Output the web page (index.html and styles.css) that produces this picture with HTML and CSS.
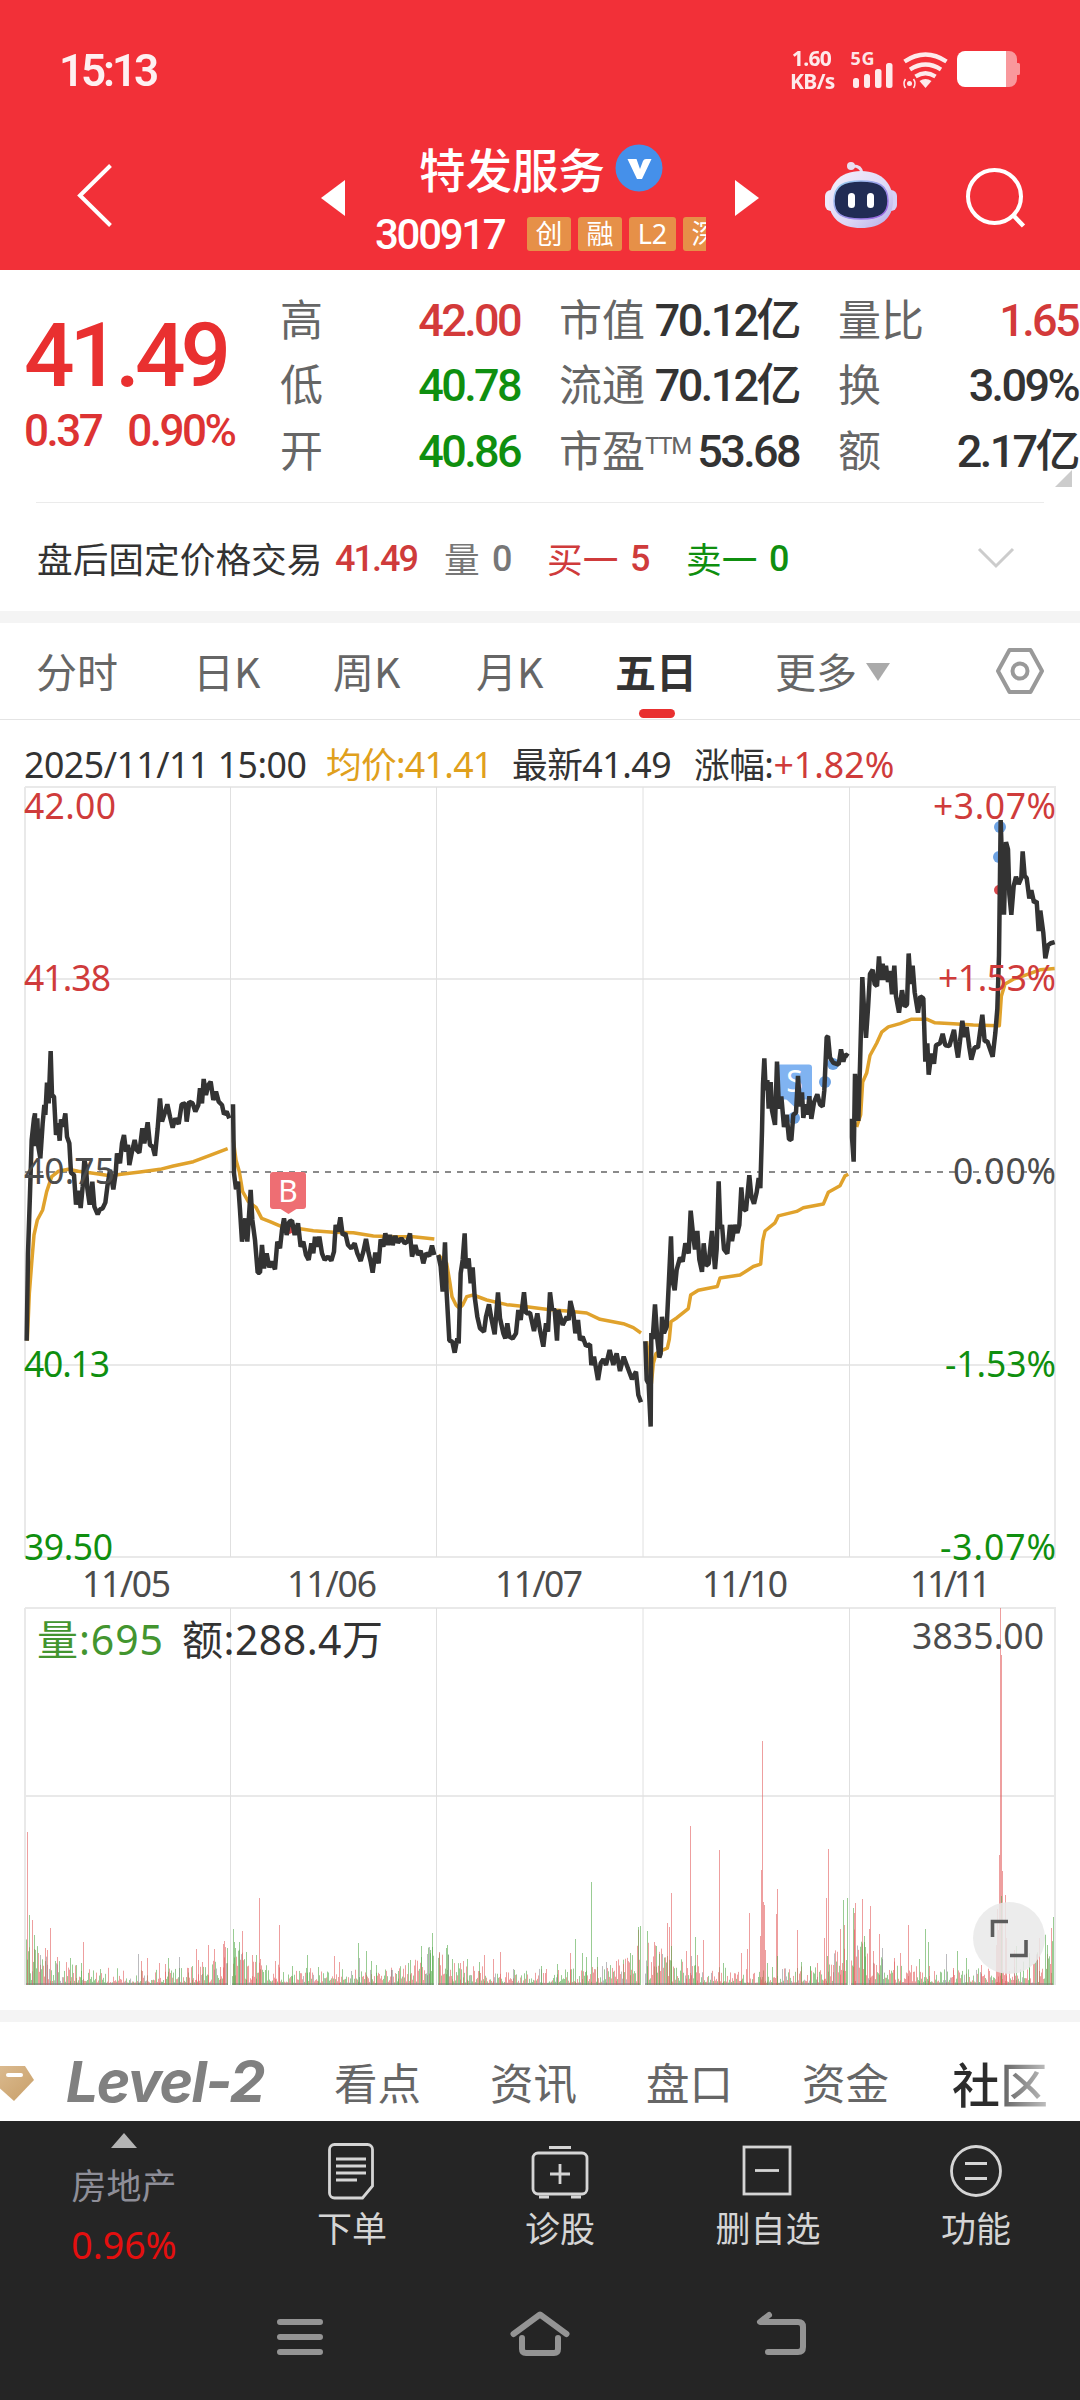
FILE: index.html
```html
<!DOCTYPE html>
<html lang="zh-CN">
<head>
<meta charset="utf-8">
<title>特发服务 300917</title>
<link rel="stylesheet" href="styles.css">
</head>
<body>
<header class="header">
  <div class="status">
    <span class="clock">15:13</span>
    <div class="net"><span>1.60</span><span>KB/s</span></div>
    <svg class="signals" width="170" height="48" viewBox="850 48 170 48">
      <g fill="#fff" fill-opacity=".9">
        <text class="fiveg" x="850.5" y="67" textLength="24">5G</text>
        <rect x="853" y="80" width="6" height="10" rx="2.5"/><rect x="864" y="76" width="6" height="14" rx="2.5"/>
        <rect x="875" y="71" width="6.500" height="19" rx="2.500"/><rect x="886" y="65" width="6.500" height="25" rx="2.500"/>
        <path d="M919.5 83q6-4 12 0l-6 7z"/><circle cx="909.500" cy="85.500" r="2.500"/>
      </g>
      <g fill="none" stroke="#fff" stroke-opacity=".9" stroke-width="4.200">
        <path d="M904.500 63.500q21-14 42 0M910 71.500q15.500-10 31 0M915.500 78.500q10-6.500 20 0"/>
        <path stroke-width="1.600" d="M905.500 81q-3 4.500 0 9M913.500 81q3 4.500 0 9"/>
      </g>
      <path d="M965 53h41v36h-41a8 8 0 0 1-8-8V61a8 8 0 0 1 8-8z" fill="#fff"/>
      <path d="M1006 53h3a8 8 0 0 1 8 8v4h1.500a1.500 1.500 0 0 1 1.500 1.500v9a1.500 1.500 0 0 1-1.500 1.500H1017v4a8 8 0 0 1-8 8h-3z" fill="#fff" fill-opacity=".5"/>
    </svg>
  </div>
  <div class="titlebar">
    <svg class="back" width="40" height="68" viewBox="75 161 40 68"><path d="M110.500 165.500 80 195.500l30.500 30" fill="none" stroke="#fff" stroke-width="4"/></svg>
    <svg class="prev" width="25" height="36" viewBox="0 0 25 36"><path d="M24 0v36L0 18z" fill="#fff"/></svg>
    <div class="stock">
      <div class="name">特发服务
        <svg width="48" height="48" viewBox="0 0 48 48"><circle cx="24" cy="24" r="23.500" fill="#4590ea"/><path d="M12.500 15h9l3.500 10 3-8q.8-2 3-2h5.500l-9.500 20h-5z" fill="#fff"/></svg>
      </div>
      <div class="code"><span>300917</span><div class="tags"><i>创</i><i>融</i><i>L2</i><i>深</i></div></div>
    </div>
    <svg class="next" width="25" height="36" viewBox="0 0 25 36"><path d="M0 0v36L24 18z" fill="#fff"/></svg>
    <svg class="robot" width="76" height="70" viewBox="823 160 76 70">
      <defs><linearGradient id="head" x1="0" y1="0" x2="1" y2="1"><stop offset="0" stop-color="#f5f0fb"/><stop offset=".6" stop-color="#dcd8f6"/><stop offset="1" stop-color="#b3aae6"/></linearGradient>
      <linearGradient id="rim" x1="0" y1="0" x2="1" y2="1"><stop offset="0" stop-color="#9bd6f2"/><stop offset="1" stop-color="#9b5ce0"/></linearGradient></defs>
      <path d="M851 166q10-1 11 7" fill="none" stroke="#eadff0" stroke-width="3"/><circle cx="851" cy="166" r="4" fill="#eadff0"/>
      <rect x="825" y="190" width="12" height="21" rx="6" fill="#eeeafa"/><rect x="885" y="190" width="12" height="21" rx="6" fill="#d6d2f6"/>
      <path d="M861 171c22 0 32 14 32 30 0 17-12 27-32 27s-32-10-32-27c0-16 10-30 32-30z" fill="url(#head)"/>
      <path d="M861 181c17 0 27 4 27 20 0 13-8 18-27 18s-27-5-27-18c0-16 10-20 27-20z" fill="#212c54" stroke="url(#rim)" stroke-width="1.500"/>
      <rect x="848" y="193" width="7" height="15" rx="3.500" fill="#fff"/><rect x="867" y="193" width="7" height="15" rx="3.500" fill="#fff"/>
    </svg>
    <svg class="search" width="62" height="62" viewBox="964 166 62 62"><circle cx="994.500" cy="196.500" r="26.500" fill="none" stroke="#fff" stroke-width="4"/><path d="m1013 215 10.500 11" stroke="#fff" stroke-width="4.500"/></svg>
  </div>
</header>

<section class="quote">
  <div class="price"><b>41.49</b><div class="delta"><span>0.37</span><span>0.90%</span></div></div>
  <div class="stats">
    <span>高</span><em class="up">42.00</em><span>市值</span><em>70.12亿</em><span class="l4">量比</span><em class="up">1.65</em>
    <span>低</span><em class="down">40.78</em><span>流通</span><em>70.12亿</em><span class="l4">换</span><em>3.09%</em>
    <span>开</span><em class="down">40.86</em><span>市盈<sup>TTM</sup></span><em>53.68</em><span class="l4">额</span><em>2.17亿</em>
  </div>
  <i class="corner"></i>
</section>
<section class="after">
  <span class="t">盘后固定价格交易</span><span class="n up">41.49</span><span class="g">量</span><span class="n g">0</span>
  <span class="up">买一</span><span class="n up">5</span><span class="down">卖一</span><span class="n down">0</span>
  <svg width="38" height="22" viewBox="0 0 38 22"><path d="m2 2 17 17L36 2" fill="none" stroke="#ccc" stroke-width="3"/></svg>
</section>

<nav class="periods">
  <span>分时</span><span>日K</span><span>周K</span><span>月K</span><span class="on">五日</span><span>更多<i></i></span>
  <svg width="50" height="48" viewBox="0 0 50 48"><path d="M14.500 3h21L47 24 35.500 45h-21L3 24z" fill="none" stroke="#999" stroke-width="4" stroke-linejoin="round"/><circle cx="25" cy="24" r="7.500" fill="none" stroke="#999" stroke-width="4"/></svg>
</nav>
<div class="legend"><span class="a">2025/11/11 15:00</span><span class="avg">均价:41.41</span><span class="a">最新41.49</span><span>涨幅:<b>+1.82%</b></span></div>

<svg class="chart" width="1080" height="825" viewBox="0 780 1080 825">
  <g class="grid">
    <path class="wide" d="M25 787H1056M25 979H1056M25 1365H1056M25 1557H1056M25 787V1557M1055 787V1557"/>
    <path d="M230.500 787V1557M436.500 787V1557M643 787V1557M849.500 787V1557"/>
    <path class="zero" d="M25 1172H1055"/>
  </g>
  <g class="mark">
    <rect x="777" y="1064.500" width="35" height="35" rx="3" fill="#80b3f1"/><path d="M786 1099h17l-8.500 8z" fill="#80b3f1"/>
    <text x="794.500" y="1092" textLength="17" class="tag">S</text>
    <g fill="#6ea3e3"><circle cx="794" cy="1118" r="6"/><circle cx="825" cy="1082" r="6"/><circle cx="833" cy="1064" r="6"/><circle cx="1000" cy="827" r="6"/><circle cx="999" cy="857" r="6"/></g>
    <circle cx="999" cy="890" r="5" fill="#d9484c"/>
  </g>
  <g class="avgline">
    <g transform="translate(0 980) scale(.33333)">
      <polyline points="82,1082 88,940 95,850 102,765 112,720 128,690 140,635 155,590 175,574 205,568 235,574 280,580 330,587 370,582 420,576 480,568 520,558 580,545 630,526 683,506"/>
      <polyline points="700,480 708,540 718,575 728,635 745,665 768,682 785,715 810,725 845,740 890,745 940,752 1000,757 1060,758 1120,768 1180,770 1240,770 1303,777"/>
    </g>
    <g transform="translate(420 1150) scale(.33333)">
      <polyline points="55,315 80,340 90,400 96,440 108,465 118,475 128,465 140,440 160,435 200,450 260,464 320,470 390,479 440,483 500,489 540,508 610,521 640,533 663,549"/>
    </g>
    <g transform="translate(640 780) scale(.33333 .40816)">
      <polyline points="20,1375 34,1480 40,1430 48,1405 64,1398 82,1392 88,1370 93,1327 110,1318 145,1295 152,1262 175,1250 232,1241 240,1220 300,1213 325,1200 340,1192 362,1186 368,1130 375,1105 405,1085 415,1068 470,1057 490,1048 550,1039 565,1010 600,994 615,970 625,966"/>
      <polyline points="650,850 662,820 668,740 680,718 690,675 710,645 725,618 745,605 780,597 815,586 860,586 885,595 940,597 1000,600 1078,602 1084,530 1095,500 1120,488 1150,480 1200,465 1244,462"/>
    </g>
  </g>
  <circle cx="289" cy="1229" r="5" fill="#d9484c"/>
  <g class="line">
    <g transform="translate(0 980) scale(.33333)">
      <polyline points="80,1082 84,820 90,640 95,480 102,415 105,400 104,498 112,415 115,500 121,535 128,430 133,375 136,405 141,308 146,370 152,213 156,345 162,350 168,465 174,430 179,482 183,418 189,440 196,400 201,470 208,490 213,578 222,585 228,674 236,632 242,684 248,620 253,540 258,560 262,625 269,674 277,605 283,680 293,703 300,688 308,685 316,668 322,620 330,570 340,628 347,580 351,520 360,550 366,490 372,465 378,515 384,495 388,555 396,515 404,480 410,510 418,518 427,445 433,490 443,427 450,495 458,500 465,527 473,445 480,355 486,425 494,400 502,373 510,410 518,443 526,415 536,432 545,373 556,370 560,425 568,365 578,370 586,395 595,375 600,325 606,370 611,297 618,345 625,315 632,305 640,360 648,335 656,365 666,375 672,403 680,395 688,415"/>
      <polyline points="699,373 702,580 708,628 714,605 720,690 726,785 736,715 742,785 752,630 757,720 765,780 773,878 780,878 786,795 792,865 800,820 808,862 816,845 825,868 832,785 840,805 846,750 852,715 860,765 868,725 876,722 884,765 894,730 902,800 910,785 918,825 926,840 934,790 940,820 945,770 952,800 958,770 966,820 974,840 984,830 994,842 1002,815 1007,735 1014,755 1021,712 1028,765 1036,760 1044,795 1054,805 1064,790 1072,820 1082,843 1090,815 1098,777 1106,820 1112,845 1118,878 1126,818 1136,850 1142,778 1150,800 1156,760 1164,795 1170,765 1178,795 1186,768 1194,788 1204,775 1214,790 1222,785 1230,760 1236,830 1246,795 1254,825 1262,812 1270,850 1278,820 1288,828 1296,797 1303,825"/>
    </g>
    <g transform="translate(420 1150) scale(.33333)">
      <polyline points="55,315 62,350 68,425 75,277 80,430 88,572 97,575 104,608 112,565 116,580 122,370 128,330 134,250 138,355 146,325 152,400 158,352 164,440 172,500 180,535 192,545 198,500 207,463 214,505 224,553 234,427 240,505 250,550 256,565 262,520 268,560 278,566 288,550 295,480 302,510 312,427 318,490 330,488 342,543 352,490 360,540 370,590 378,520 384,545 390,427 396,475 404,480 411,572 415,480 428,525 440,500 446,510 451,453 460,490 466,550 474,510 480,570 488,560 498,588 510,583 514,645 522,620 534,690 542,640 550,628 558,645 569,600 580,645 590,610 600,663 611,620 622,650 636,688 648,665 655,735 663,757"/>
    </g>
    <g transform="translate(640 780) scale(.33333 .40816)">
      <polyline points="16,1375 20,1470 26,1480 32,1584 34,1355 38,1370 45,1285 52,1370 58,1415 62,1405 66,1315 72,1355 80,1340 86,1240 93,1118 97,1225 104,1250 110,1200 120,1170 128,1180 136,1135 146,1160 152,1055 160,1120 165,1150 172,1105 178,1175 186,1205 191,1135 198,1190 206,1185 216,1105 225,1198 230,1150 236,983 241,1100 246,1090 252,1150 262,1160 270,1090 276,1130 284,1090 292,1110 298,1090 304,998 309,1050 318,1055 328,968 334,1020 342,1038 350,1010 356,975 361,1000 366,860 369,745 373,682 377,760 382,735 386,805 392,740 396,810 405,845 411,690 417,805 424,775 432,850 440,820 447,880 454,882 460,820 468,815 474,725 480,800 486,765 490,828 497,795 503,820 508,775 514,830 522,790 532,770 540,795 548,800 553,760 560,630 564,628 570,680 580,693 596,697 603,660 610,690 616,672 625,677"/>
      <polyline points="636,830 636,875 641,935 645,720 650,775 655,835 660,700 667,483 672,560 678,632 684,560 690,475 698,465 704,500 711,505 717,432 722,490 728,450 734,490 738,455 744,495 750,468 756,525 763,455 768,530 777,570 786,515 794,555 801,550 806,425 812,500 818,455 824,520 834,570 841,530 850,535 856,690 862,645 866,722 874,670 882,695 888,650 900,645 908,622 916,650 928,652 942,612 948,650 954,680 960,640 967,590 974,630 980,605 988,655 994,685 1004,655 1014,655 1027,575 1034,640 1042,640 1058,678 1066,620 1072,560 1077,430 1082,98 1086,200 1092,330 1098,152 1104,170 1108,280 1114,330 1121,260 1128,237 1136,255 1144,240 1148,175 1154,235 1160,240 1168,290 1174,270 1182,300 1190,297 1196,370 1201,320 1210,375 1216,437 1224,405 1232,400 1244,397"/>
    </g>
  </g>
  <rect x="270" y="1172" width="36" height="37" rx="3" fill="#ee6e73"/><path d="M279 1208h19l-9.500 6z" fill="#ee6e73"/>
  <text x="288" y="1202" class="tag">B</text>
  <g class="labels">
    <g class="up"><text x="24" y="819" textLength="92">42.00</text><text x="24" y="991" textLength="87">41.38</text></g>
    <text x="24" y="1184" textLength="91">40.75</text>
    <g class="down"><text x="24" y="1377" textLength="86">40.13</text><text x="24" y="1560" textLength="89">39.50</text></g>
    <g text-anchor="end">
      <g class="up"><text x="1056" y="819" textLength="123">+3.07%</text><text x="1056" y="991" textLength="118">+1.53%</text></g>
      <text x="1056" y="1184" textLength="103">0.00%</text>
      <g class="down"><text x="1056" y="1377" textLength="111">-1.53%</text><text x="1056" y="1560" textLength="116">-3.07%</text></g>
    </g>
    <g class="dates"><text x="82" y="1597" textLength="89">11/05</text><text x="287" y="1597" textLength="90">11/06</text><text x="495" y="1597" textLength="88">11/07</text><text x="702" y="1597" textLength="86">11/10</text><text x="910" y="1597" textLength="81">11/11</text></g>
  </g>
</svg>

<svg class="volume" width="1080" height="405" viewBox="0 1605 1080 405">
  <g class="grid"><path class="wide" d="M25 1608H1056M25 1796H1056M25 1608V1985M1055 1608V1985"/><path d="M230.500 1608V1985M436.500 1608V1985M643 1608V1985M849.500 1608V1985"/></g>
  <g id="bars"></g>
  <text x="37" y="1655" textLength="126" class="vol">量:695</text>
  <text x="182" y="1655" textLength="201" class="amt">额:288.4万</text>
  <text x="1044" y="1649" textLength="132" text-anchor="end" class="max">3835.00</text>
  <circle cx="1009" cy="1938" r="36" fill="#e9e9e9" fill-opacity=".86"/>
  <path d="M992.500 1937v-15.500h15.500M1010 1955.500h16V1940" fill="none" stroke="#5c5c5c" stroke-width="3.600"/>
</svg>

<nav class="sections">
  <svg class="gem" width="36" height="42" viewBox="0 2060 36 42"><defs><linearGradient id="gold" x1="0" y1="0" x2="1" y2="1"><stop offset="0" stop-color="#dcbc92"/><stop offset="1" stop-color="#c89f68"/></linearGradient></defs><path d="M-4 2064h29l9 14-20 21-20-18z" fill="url(#gold)"/><rect x="6" y="2071" width="17" height="4" rx="2" fill="#fff"/></svg>
  <span class="level">Level-2</span><span>看点</span><span>资讯</span><span>盘口</span><span>资金</span><span class="on">社区</span>
</nav>

<footer class="footer">
  <div class="actions">
    <div class="sector"><i></i><span>房地产</span><b>0.96%</b></div>
    <div><svg viewBox="0 0 60 60"><path d="M12.500 4.500h33a5 5 0 0 1 5 5V46l-10 12h-28a5 5 0 0 1-5-5V9.500a5 5 0 0 1 5-5z"/><path d="M14 19h30M14 26h30M14 33h30M14 40h21"/></svg><span>下单</span></div>
    <div><svg viewBox="0 0 60 60"><rect x="3" y="13" width="54" height="41" rx="5"/><path d="M19 7.500h22M30 24v20M20 34h20M9 57h10M41 57h10"/></svg><span>诊股</span></div>
    <div><svg viewBox="0 0 60 60"><rect x="6" y="7" width="46" height="47"/><path d="M17 30.500h24"/></svg><span>删自选</span></div>
    <div><svg viewBox="0 0 60 60"><circle cx="30" cy="31" r="24.500"/><path d="M19 23.500h22M19 38.500h22"/></svg><span>功能</span></div>
  </div>
  <div class="sysnav">
    <svg width="50" height="48" viewBox="275 2310 50 48"><path d="M280 2322h40M280 2337h40M280 2352h40"/></svg>
    <svg width="62" height="48" viewBox="509 2310 62 48"><path d="m513.500 2334 26.500-19.500 26.500 19.500M522 2338v11q0 4 4 4h28q4 0 4-4v-11"/></svg>
    <svg width="54" height="48" viewBox="754 2310 54 48"><path d="m769 2315-9 7h38q5 0 5 5v20q0 5-5 5h-30"/></svg>
  </div>
</footer>
<script src="volume.js"></script>
</body>
</html>
```
FILE: styles.css
```css
* { box-sizing: border-box; }
body { margin: 0; width: 1080px; height: 2400px; overflow: hidden; background: #fff; color: #333; font-family: "Noto Sans", "Noto Sans CJK SC", sans-serif; }
svg { display: block; flex: none; }
i, em { font-style: normal; }
.up { color: #cf3b3b; fill: #cf3b3b; }
.down { color: #0f8f0f; fill: #0f8f0f; }

.header { height: 270px; background: #f23038; color: #fff; }
.status { height: 140px; padding: 0 60px; display: flex; align-items: center; }
.clock { font: 600 44px/56px Roboto, sans-serif; letter-spacing: -3.1px; margin-left: -1px; padding-top: 2px; flex: 1; opacity: .93; }
.net { display: flex; flex-direction: column; width: 43px; margin-right: 17px; font: 700 21px/23px "Noto Sans", sans-serif; opacity: .9; letter-spacing: -.6px; text-align: center; white-space: nowrap; }
.signals { overflow: visible; }
.fiveg { font: 700 18px "Noto Sans", sans-serif; }
.titlebar { height: 130px; display: grid; grid-template-columns: 246px 56px 358px 88px 141px 1fr; padding-left: 75px; align-items: start; }
.back { margin-top: 21px; }
.prev, .next { margin-top: 40px; }
.robot { margin-top: 20px; }
.search { margin-top: 26px; }
.name { display: flex; align-items: center; gap: 10px; padding-left: 42px; height: 56px; font: 500 46.500px/52px "Noto Sans CJK SC", sans-serif; white-space: nowrap; }
.code { display: flex; align-items: center; margin-top: 11px; height: 54px; }
.code > span { width: 152px; margin-left: -2px; font: 500 42px/52px Roboto, sans-serif; letter-spacing: -2.300px; padding-top: 2px; }
.tags { display: flex; gap: 7px; width: 179px; overflow: hidden; }
.tags i { flex: none; width: 44px; height: 34px; border-radius: 3px; background: #e69048; font: 400 27px/34px "Noto Sans", "Noto Sans CJK SC", sans-serif; text-align: center; }
.tags i:nth-child(3) { width: 47px; }

.quote { position: relative; height: 233px; padding: 18px 0 0 24px; display: flex; }
.quote::after { content: ""; position: absolute; left: 36px; right: 36px; bottom: 0; height: 1px; background: #ebebeb; }
.price { width: 256px; color: #e93030; white-space: nowrap; }
.price b { display: block; padding-top: 12px; font: 500 89px/112px Roboto, sans-serif; letter-spacing: -5px; }
.delta { font: 500 44px/44px Roboto, sans-serif; letter-spacing: -2.500px; color: #d33; display: flex; gap: 26px; margin-top: -3px; }
.stats { flex: 1; display: grid; grid-template-columns: 140px 102px 180px 99px 1fr 1fr; grid-template-rows: repeat(3, 65.500px); align-items: center; font: 400 43px/60px Roboto, "Noto Sans CJK SC", sans-serif; color: #666; white-space: nowrap; }
.stats span:nth-child(6n+3), .stats .l4 { padding-left: 37px; }
.stats em { text-align: right; font-weight: 500; font-size: 45px; letter-spacing: -2.600px; margin-right: 2px; color: #333; justify-self: end; }
.stats em.up { color: #d33a3a; }
.stats em.down { color: #0f8f0f; }
.stats sup { font-size: 24px; line-height: 0; vertical-align: 13px; letter-spacing: -1.300px; }
.corner { position: absolute; right: 8px; bottom: 16px; border: solid transparent; border-width: 0 0 17px 17px; border-bottom-color: #ccc; }
.after { height: 110px; display: grid; grid-template-columns: 299px 108px 49px 54px 84px 55px 84px 207px 38px; padding-left: 37px; align-items: center; font: 400 35.700px/50px "Noto Sans CJK SC", sans-serif; white-space: nowrap; }
.after .n { font: 500 36px/50px Roboto, sans-serif; letter-spacing: -2px; margin-left: -1px; padding-top: 2px; }
.after .g { color: #777; }

.periods { margin-top: -2px; height: 109px; border-top: 12px solid #f4f4f4; border-bottom: 1px solid #e4e4e4; padding-left: 36px; display: grid; grid-template-columns: 157px 140px 143px 139px 160px 220px 50px; align-items: center; font: 400 41px/60px "Noto Sans CJK SC", sans-serif; color: #666; white-space: nowrap; }
.periods span { position: relative; top: -1px; }
.periods .on { font-weight: 700; color: #333; }
.periods .on::after { content: ""; position: absolute; left: 24px; top: 69px; width: 36px; height: 9px; border-radius: 5px; background: #e93030; }
.periods i { display: inline-block; margin-left: 9px; vertical-align: 7px; border: solid transparent; border-width: 18px 12px 0; border-top-color: #aaa; }
.legend { height: 60px; padding: 19px 0 0 24px; display: grid; grid-template-columns: 302px 186px 182px 1fr; font: 400 35.700px/50px "Noto Sans", "Noto Sans CJK SC", sans-serif; letter-spacing: -.5px; white-space: nowrap; }
.legend .avg { color: #e0a01c; letter-spacing: -.7px; }
.legend b { font-weight: 400; color: #cf3b3b; letter-spacing: 0; }

.grid path { fill: none; stroke: #e0e0e0; stroke-width: 1; }
.grid .wide { stroke: #e9e9e9; stroke-width: 2; }
.grid .zero { stroke: #8a8a8a; stroke-width: 2; stroke-dasharray: 6 6; }
.line polyline { fill: none; stroke: #333; stroke-width: 4.500; vector-effect: non-scaling-stroke; stroke-linejoin: bevel; }
.avgline polyline { fill: none; stroke: #e0a22c; stroke-width: 3.500; vector-effect: non-scaling-stroke; stroke-linejoin: round; }
.labels { font: 400 35.500px "Noto Sans", sans-serif; fill: #4c4c4c; }
.tag { font: 400 30px "Noto Sans", sans-serif; fill: #fff; text-anchor: middle; }
.vol { font: 400 41px "Noto Sans", "Noto Sans CJK SC", sans-serif; fill: #43952f; }
.amt { font: 400 41px "Noto Sans", "Noto Sans CJK SC", sans-serif; fill: #333; }
.max { font: 400 35.500px "Noto Sans", sans-serif; fill: #4c4c4c; }

.sections { height: 111px; border-top: 12px solid #f4f4f4; display: grid; grid-template-columns: 66px 268px 156px 156px 156px 150px 1fr; align-items: center; padding-top: 20px; font: 400 43.500px/60px "Noto Sans CJK SC", sans-serif; color: #666; white-space: nowrap; }
.sections .level { font: italic 700 57px/60px Inter, "Noto Sans", sans-serif; letter-spacing: -1.500px; color: #808080; }
.sections .gem { margin-top: 2px; }
.sections .on { width: 98px; font-weight: 500; font-size: 48px; color: transparent; background: linear-gradient(90deg, #2c2c2c 48%, #666 52%, #c4c4c4); background-clip: text; -webkit-background-clip: text; }

.footer { height: 279px; background: #252525; color: #d5d5d5; }
.actions { height: 170px; display: grid; grid-template-columns: 248px 208px 208px 208px 208px; }
.actions > div { display: flex; flex-direction: column; align-items: center; }
.actions svg { width: 60px; height: 60px; margin-top: 19px; fill: none; stroke: #d5d5d5; stroke-width: 2.800; }
.actions span { font: 400 35px/50px "Noto Sans CJK SC", sans-serif; margin-top: 2px; }
.actions .sector i { margin-top: 12px; border: solid transparent; border-width: 0 13px 15px; border-bottom-color: #b5b5b5; }
.actions .sector span { margin-top: 11px; color: #8e8e98; }
.actions .sector b { font: 400 37.500px/50px "Noto Sans", sans-serif; color: #e40f0f; margin-top: 11px; }
.sysnav { display: grid; grid-template-columns: 234px 245px 1fr; padding: 19px 0 0 275px; }
.sysnav svg path { fill: none; stroke: #949494; stroke-width: 6; stroke-linecap: round; stroke-linejoin: round; }
```
FILE: volume.js
```js
const RED = 'rgba(225,90,90,.58)', GREEN = 'rgba(85,170,75,.6)', GREY = 'rgba(120,120,125,.5)';
const BASE = 1985;
const bars = document.getElementById('bars');

function bar(x, h, color, w = 1) {
  const r = document.createElementNS('http://www.w3.org/2000/svg', 'rect');
  r.setAttribute('x', Math.round(x));
  r.setAttribute('y', BASE - h);
  r.setAttribute('width', w);
  r.setAttribute('height', h);
  r.setAttribute('fill', color);
  bars.appendChild(r);
}

let seed = 91;
function rnd() {
  seed = (seed * 16807) % 2147483647;
  return seed / 2147483647;
}

// minute volumes: busiest after the open and before the close
const open = [32, 24, 20, 28, 42], close = [16, 22, 28, 26, 40];
for (let day = 0; day < 5; day++) {
  const x0 = 26 + day * 206.2;
  for (let i = 0; i < 202; i++) {
    const p = i / 200;
    const amp = 14 + open[day] * Math.exp(-p * 8) + close[day] * Math.exp(-(1 - p) * 12);
    const edge = 0.5 * (amp - 14) * rnd();
    const h = 2 + edge + amp * Math.pow(rnd(), 1.8);
    const c = rnd();
    bar(x0 + i, h, c < .5 ? RED : c < .93 ? GREEN : GREY);
    bar(x0 + i, 2, GREY);
  }
}

const peaks = {
  r: [[27,153],[32,65],[45,37],[47,35],[50,57],[57,28],[83,43],[141,24],[147,27],[159,22],[165,21],[188,17],[196,36],[198,25],[202,23],[208,40],[214,36],[220,18],[223,41],[224,44],[242,54],[252,30],[259,87],[260,26],[275,24],[279,60],[334,29],[339,23],[439,33],[460,22],[463,24],[484,30],[493,26],[500,33],[570,32],[616,24],[623,21],[654,43],[667,62],[669,58],[671,92],[686,34],[690,159],[697,30],[703,45],[719,135],[741,32],[747,36],[749,72],[760,49],[761,115],[762,244],[763,83],[764,80],[765,35],[776,71],[777,96],[797,55],[817,22],[824,47],[826,87],[828,136],[833,20],[840,56],[844,60],[855,82],[854,72],[862,86],[869,56],[870,79],[873,34],[879,51],[894,27],[900,32],[908,60],[929,19],[953,17],[981,20],[997,76],[996,40],[998,55],[999,130],[1001,330],[1002,114],[1005,90],[1006,47],[1014,35],[1037,31],[1039,47],[1051,57]],
  g: [[29,70],[34,50],[70,27],[76,20],[81,22],[168,27],[192,19],[227,37],[233,56],[234,43],[235,37],[239,43],[246,33],[256,30],[292,19],[307,30],[318,18],[358,42],[366,34],[371,24],[376,20],[398,14],[410,25],[421,39],[430,35],[432,52],[446,37],[447,40],[452,26],[467,26],[479,23],[541,19],[557,21],[575,46],[582,32],[586,28],[591,103],[597,28],[630,32],[638,58],[640,59],[647,54],[656,39],[659,31],[671,39],[695,48],[723,22],[767,22],[772,18],[777,29],[801,23],[810,19],[827,29],[843,85],[847,87],[853,77],[864,49],[865,38],[919,26],[925,56],[928,43],[957,34],[966,27],[1001,89],[1016,39],[1029,32],[1047,40],[1053,68]],
  n: [[40,30],[138,31],[179,28],[359,27],[391,15],[427,31],[429,38],[448,30],[513,16],[606,23],[691,29],[882,37],[946,31]]
};
peaks.r.forEach(([x, h]) => bar(x, h, RED));
peaks.g.forEach(([x, h]) => bar(x, h, GREEN));
peaks.n.forEach(([x, h]) => bar(x, h, GREY));
bar(1000, 377, RED);
```
